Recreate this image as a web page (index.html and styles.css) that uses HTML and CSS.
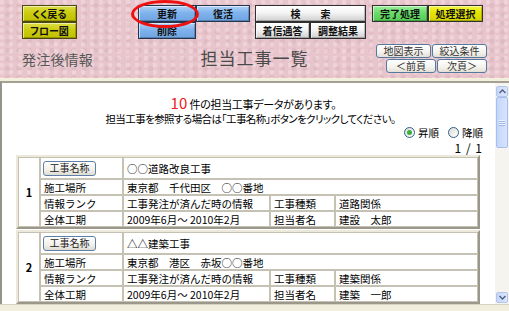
FILE: index.html
```html
<!DOCTYPE html>
<html lang="ja">

<head>
    <meta charset="UTF-8">
    <meta name="viewport" content="width=device-width, initial-scale=1.0">
    <title>担当工事一覧</title>
    <link rel="stylesheet" href="styles.css">
</head>

<body>
    <div class="page">
        <div class="head">
            <div class="toolbar">
                <div class="group col1">
                    <button class="btn yellow">くく戻る</button>
                    <button class="btn yellow">フロー図</button>
                </div>
                <div class="group col2">
                    <button class="btn blue">更新</button>
                    <button class="btn blue">復活</button>
                    <button class="btn blue">削除</button>
                </div>
                <div class="group col3">
                    <button class="btn white wide">検　　索</button>
                    <button class="btn white">着信通答</button>
                    <button class="btn white">調整結果</button>
                </div>
                <div class="group col4">
                    <button class="btn green">完了処理</button>
                    <button class="btn lemon">処理選択</button>
                </div>
            </div>

            <div class="titlebar">
                <div class="section">発注後情報</div>
                <h1 class="title">担当工事一覧</h1>
                <div class="nav">
                    <div class="nav_row">
                        <button class="sbtn w55">地図表示</button>
                        <button class="sbtn w55">絞込条件</button>
                    </div>
                    <div class="nav_row">
                        <button class="sbtn w50">＜前頁</button>
                        <button class="sbtn w50">次頁＞</button>
                    </div>
                </div>
            </div>

            <!-- red circle drawn over the 更新 button -->
            <span class="mark"></span>
        </div>

        <div class="frame">
            <div class="content">
                <p class="msg first_msg"><span class="count">10</span> 件の担当工事データがあります。</p>
                <p class="msg">担当工事を参照する場合は「工事名称」ボタンをクリックしてください。</p>

                <div class="sort">
                    <label class="radio"><span class="dot checked"></span>昇順</label>
                    <label class="radio"><span class="dot"></span>降順</label>
                </div>
                <div class="pages">1 / 1</div>

                <table class="record">
                    <colgroup>
                        <col class="c_num">
                        <col class="c_label">
                        <col class="c_value">
                        <col class="c_label2">
                        <col class="c_value2">
                    </colgroup>
                    <tr class="first">
                        <td class="num" rowspan="4">1</td>
                        <td><button class="name_btn">工事名称</button></td>
                        <td colspan="3">○○道路改良工事</td>
                    </tr>
                    <tr>
                        <td>施工場所</td>
                        <td colspan="3">東京都　千代田区　○○番地</td>
                    </tr>
                    <tr>
                        <td>情報ランク</td>
                        <td>工事発注が済んだ時の情報</td>
                        <td>工事種類</td>
                        <td>道路関係</td>
                    </tr>
                    <tr>
                        <td>全体工期</td>
                        <td>2009年6月～ 2010年2月</td>
                        <td>担当者名</td>
                        <td>建設　太郎</td>
                    </tr>
                </table>

                <table class="record">
                    <colgroup>
                        <col class="c_num">
                        <col class="c_label">
                        <col class="c_value">
                        <col class="c_label2">
                        <col class="c_value2">
                    </colgroup>
                    <tr class="first">
                        <td class="num" rowspan="4">2</td>
                        <td><button class="name_btn">工事名称</button></td>
                        <td colspan="3">△△建築工事</td>
                    </tr>
                    <tr>
                        <td>施工場所</td>
                        <td colspan="3">東京都　港区　赤坂○○番地</td>
                    </tr>
                    <tr>
                        <td>情報ランク</td>
                        <td>工事発注が済んだ時の情報</td>
                        <td>工事種類</td>
                        <td>建築関係</td>
                    </tr>
                    <tr>
                        <td>全体工期</td>
                        <td>2009年6月～ 2010年2月</td>
                        <td>担当者名</td>
                        <td>建築　一郎</td>
                    </tr>
                </table>
            </div>

            <div class="scrollbar">
                <span class="arrow">
                    <svg width="7" height="5" viewBox="0 0 7 5"><path d="M0.5 4 L3.5 1 L6.5 4" fill="none" stroke="#4d6185" stroke-width="1.4"/></svg>
                </span>
                <span class="thumb"><i></i><i></i><i></i></span>
                <span class="track"></span>
                <span class="arrow">
                    <svg width="7" height="5" viewBox="0 0 7 5"><path d="M0.5 1 L3.5 4 L6.5 1" fill="none" stroke="#4d6185" stroke-width="1.4"/></svg>
                </span>
            </div>
        </div>

        <div class="foot"></div>
    </div>
</body>

</html>
```

FILE: styles.css
```css
* {
    margin: 0;
    padding: 0;
    box-sizing: border-box;
}

body {
    width: 509px;
    height: 311px;
    overflow: hidden;
    font-family: "Noto Sans CJK JP", sans-serif;
    font-size: 11px;
    color: #000;
    background: #fff;
}

button {
    font-family: inherit;
    cursor: default;
}

.page {
    height: 311px;
    display: flex;
    flex-direction: column;
}

/* header */

.head {
    position: relative;
    height: 81px;
    padding-top: 5px;
    background-color: #e8c5cc;
    background-image:
        radial-gradient(circle at 20% 30%, rgba(255, 255, 255, 0.25) 0 2px, transparent 3px),
        radial-gradient(circle at 70% 60%, rgba(190, 140, 150, 0.18) 0 2px, transparent 3px);
    background-size: 9px 7px, 11px 9px;
    border-bottom: 3px solid #f3efdd;
}

.toolbar {
    display: flex;
    align-items: flex-start;
    padding-left: 22px;
    height: 34px;
}

.group {
    display: grid;
    grid-auto-rows: 17px;
}

.col1 {
    grid-template-columns: 55px;
}

.col2 {
    margin-left: 61px;
    grid-template-columns: 58px 54px;
}

.col3 {
    margin-left: 5px;
    grid-template-columns: 55px 56px;
}

.col4 {
    margin-left: 6px;
    grid-template-columns: 56px 55px;
}

.btn {
    height: 17px;
    border: 1px solid #303030;
    font-size: 10px;
    font-weight: bold;
    font-feature-settings: "palt";
    color: #111;
    line-height: 14px;
    box-shadow: inset 1px 1px 0 rgba(255, 255, 255, 0.55), inset -1px -1px 0 rgba(0, 0, 0, 0.22);
}

.wide {
    grid-column: 1 / span 2;
}

.yellow {
    background: linear-gradient(#dede4a, #cccc10 45%, #c0c000);
    border-color: #4a4a10;
}

.blue {
    background: linear-gradient(#b2d2f7, #80b3ed 45%, #6fa4e2);
    border-color: #23364f;
}

.white {
    background: linear-gradient(#ffffff, #f4f4f4 45%, #cfcfcf);
}

.green {
    background: linear-gradient(#9cef9c, #6adc6a 45%, #55cc55);
}

.lemon {
    background: linear-gradient(#f6f640, #e4e400 45%, #d4d400);
}

.titlebar {
    margin-top: 4px;
    height: 31px;
    padding: 0 22px;
    display: grid;
    grid-template-columns: 1fr auto 1fr;
    align-items: center;
}

.section {
    font-size: 14px;
    color: #585858;
    letter-spacing: 0.2px;
}

.title {
    font-size: 17px;
    font-weight: normal;
    color: #4a4a4a;
    letter-spacing: 1px;
    margin-top: -3px;
}

.nav {
    display: flex;
    flex-direction: column;
    align-items: flex-end;
    gap: 1px;
}

.nav_row {
    display: flex;
    gap: 1px;
}

.sbtn {
    height: 14px;
    border: 1px solid #55789f;
    border-radius: 3px;
    background: linear-gradient(#ffffff, #f3f2ec 60%, #e2e0d6);
    font-size: 10px;
    line-height: 12px;
    color: #333;
    font-feature-settings: "palt";
}

.w55 {
    width: 55px;
}

.w50 {
    width: 50px;
}

.mark {
    position: absolute;
    left: 131px;
    top: 0;
    width: 68px;
    height: 28px;
    border: 3px solid #ee1111;
    border-radius: 50%;
}

/* body frame */

.frame {
    flex: 1;
    display: flex;
    border-top: 2px solid #a4a094;
    border-left: 2px solid #94948c;
    min-height: 0;
}

.content {
    flex: 1;
    padding: 12px 12px 0 14px;
    overflow: hidden;
}

.msg {
    text-align: center;
    font-size: 10.5px;
    font-feature-settings: "palt";
    letter-spacing: -0.6px;
    line-height: 14px;
    padding-left: 2px;
}

.first_msg {
    font-size: 11px;
    letter-spacing: -0.3px;
    line-height: 15px;
    padding-left: 8px;
}

.count {
    color: #ee2020;
    font-size: 15px;
    letter-spacing: 0;
}

.sort {
    display: flex;
    justify-content: flex-end;
    gap: 9px;
    height: 13px;
    font-size: 10.5px;
    line-height: 13px;
}

.radio {
    display: flex;
    align-items: center;
    gap: 3px;
}

.dot {
    width: 11px;
    height: 11px;
    border: 1px solid #2f5f8f;
    border-radius: 50%;
    background: linear-gradient(135deg, #dcdcd4, #ffffff);
    display: flex;
    align-items: center;
    justify-content: center;
}

.dot.checked::after {
    content: "";
    width: 5px;
    height: 5px;
    border-radius: 50%;
    background: #3cae3c;
}

.pages {
    text-align: right;
    font-size: 12px;
    line-height: 15px;
    letter-spacing: 1px;
    margin-top: 1px;
}

.record {
    width: 464px;
    margin-bottom: 1px;
    table-layout: fixed;
    border-collapse: separate;
    border-spacing: 0;
    border: 2px solid;
    border-color: #ece8da #9b978a #9b978a #ece8da;
    background: #fff;
}

.c_num {
    width: 22px;
}

.c_label {
    width: 83px;
}

.c_value {
    width: 147px;
}

.c_label2 {
    width: 65px;
}

.c_value2 {
    width: 143px;
}

.record td {
    border: 1px solid #c6c2b3;
    height: 16px;
    padding: 0 3px;
    font-size: 10.5px;
    line-height: 13px;
    white-space: nowrap;
    overflow: hidden;
}

.record .first td {
    height: 22px;
}

.record td.num {
    text-align: center;
    font-size: 11px;
    font-weight: bold;
    padding: 0;
}

.name_btn {
    width: 53px;
    height: 15px;
    border: 1px solid #5f7fa6;
    border-radius: 3px;
    background: linear-gradient(#ffffff, #f1f0ea 60%, #dedcd2);
    font-size: 10px;
    line-height: 12px;
    color: #222;
    margin-left: -1px;
}

/* fake scrollbar */

.scrollbar {
    width: 14px;
    display: flex;
    flex-direction: column;
    align-items: center;
    padding: 3px 0 1px;
    background: #f5f4ee;
}

.arrow {
    width: 12px;
    height: 11px;
    border: 1px solid #b3c6ea;
    border-radius: 2px;
    background: linear-gradient(90deg, #c7d7f8, #dde7fb);
    display: flex;
    align-items: center;
    justify-content: center;
}

.thumb {
    width: 12px;
    height: 51px;
    border: 1px solid #a5bdef;
    border-radius: 2px;
    background: linear-gradient(90deg, #c5d6fb, #d8e3fc);
    display: flex;
    flex-direction: column;
    align-items: center;
    justify-content: center;
    gap: 1px;
}

.thumb i {
    width: 6px;
    height: 1px;
    background: #eef3fe;
    box-shadow: 0 1px 0 #9fb6e8;
}

.track {
    flex: 1;
}

.foot {
    height: 7px;
    background: #f2eedd;
    border-top: 1px solid #d6d2c2;
}
```
